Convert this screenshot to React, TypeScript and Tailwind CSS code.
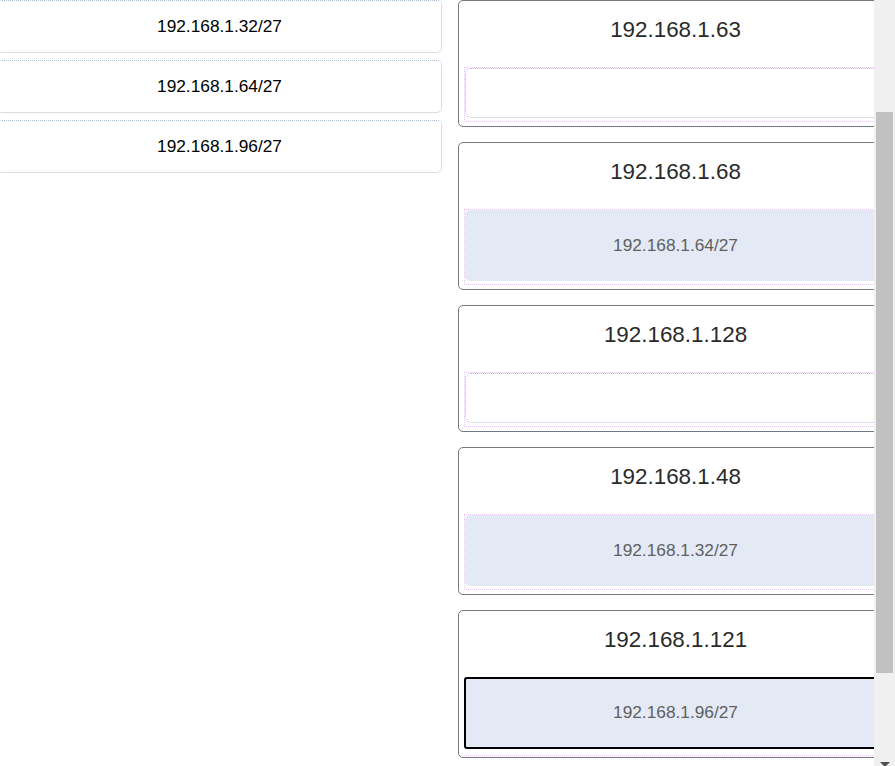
import React from "react";

type Host = { ip: string; subnet?: string; active?: boolean };

const subnets = ["192.168.1.32/27", "192.168.1.64/27", "192.168.1.96/27"];

const hosts: Host[] = [
  { ip: "192.168.1.63" },
  { ip: "192.168.1.68", subnet: "192.168.1.64/27" },
  { ip: "192.168.1.128" },
  { ip: "192.168.1.48", subnet: "192.168.1.32/27" },
  { ip: "192.168.1.121", subnet: "192.168.1.96/27", active: true },
];

const HostCard: React.FC<{ host: Host }> = ({ host }) => {
  return (
    <div
      className={`rounded-[5px] border border-[#737980] px-[5px] pt-[16px] ${
        host.active ? "pb-[1px]" : "pb-[4px]"
      }`}
    >
      <div className="mb-[24px] text-center text-[22.4px] leading-[26px] text-[#2a2a2a]">
        {host.ip}
      </div>
      {host.active ? (
        // dragged item, outlined
        <div className="border-b border-dotted border-[#e6c3f0] pb-[6px]">
          <div className="flex h-[72px] items-center justify-center rounded-[3px] border-2 border-black bg-[#e3eaf6] text-[17.3px] text-[#5f5f5f]">
            {host.subnet}
          </div>
        </div>
      ) : (
        <div className="border border-dotted border-[#e6c3f0] pb-[3px]">
          {host.subnet ? (
            <div className="flex h-[71px] items-center justify-center rounded-[5px] bg-[#e3eaf6] text-[17.3px] text-[#5f5f5f]">
              {host.subnet}
            </div>
          ) : (
            <div className="h-[50px] rounded-[6px] border border-dotted border-[#b3bcdc]" />
          )}
        </div>
      )}
    </div>
  );
};

const Scrollbar: React.FC = () => (
  <div className="flex w-[21px] shrink-0 flex-col bg-[#f0f0f0]">
    <div className="h-[112px]" />
    <div className="mx-[2px] h-[561px] bg-[#c1c1c1]" />
    <div className="flex-1" />
    <div className="flex h-[4px] justify-center overflow-hidden">
      <svg width="10" height="6" viewBox="0 0 10 6" className="shrink-0">
        <path d="M0 0 H10 L5 5 Z" fill="#505050" />
      </svg>
    </div>
  </div>
);

const App: React.FC = () => {
  return (
    <div className="flex h-[766px] w-full overflow-hidden bg-white font-['Liberation_Sans',Arial,sans-serif]">
      <div className="flex-1 overflow-hidden">
        <div className="ml-[-3px] flex w-[896px] items-start gap-[16px]">
          {/* subnets */}
          <div className="flex w-[445px] shrink-0 flex-col gap-[7px]">
            {subnets.map((s) => (
              <div
                key={s}
                className="flex h-[53px] items-center justify-center rounded-[5px] border border-dotted border-[#a9bdd6] text-[17.3px] text-black"
              >
                {s}
              </div>
            ))}
          </div>
          {/* hosts */}
          <div className="flex w-[435px] shrink-0 flex-col gap-[15px]">
            {hosts.map((h) => (
              <HostCard key={h.ip} host={h} />
            ))}
          </div>
        </div>
      </div>
      <Scrollbar />
    </div>
  );
};

export default App;
